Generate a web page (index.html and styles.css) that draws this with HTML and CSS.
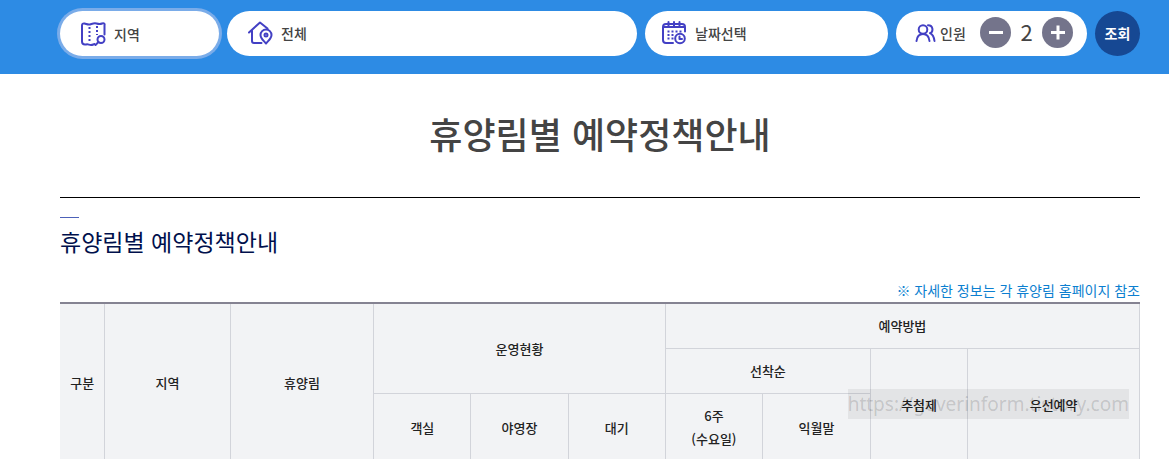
FILE: index.html
```html
<!DOCTYPE html>
<html lang="ko">
<head>
    <meta charset="UTF-8">
    <meta name="viewport" content="width=device-width, initial-scale=1.0">
    <title>휴양림별 예약정책안내</title>
    <link rel="stylesheet" href="styles.css">
</head>
<body>
    <header class="search-bar">
        <form class="search-form">
            <button type="button" class="field active">
                <svg class="icon" viewBox="0 0 25 24">
                    <path d="M5 22.500H4C2 22.500 1 21.500 1 19.500V3.500C1 2 2 1.200 3.500 1.500C6 2.200 7 3 9 2.500C12 1.500 13 .8 15.500 1.500C18 2.300 19 2.500 21 1.500C23 .8 24 1.500 23.500 3.500V12.500M5 22.500C7 21.800 8 23 10 23C11.500 23 12 22.500 13.500 22"/>
                    <path class="dots" d="M8.500 5V21M16 4V13"/>
                    <circle cx="20" cy="17.500" r="3.500"/>
                    <path d="M17.500 20L14.500 23"/>
                </svg>
                <span>지역</span>
            </button>
            <button type="button" class="field field-raised">
                <svg class="icon" viewBox="0 0 25 24">
                    <path d="M1 11.500L12 1.500L19.500 7.500M4 9.500V20C4 21.500 4.500 22 6 22H13.500"/>
                    <path d="M18 22.500C15.500 19.500 12.500 17.500 12.500 14A5.500 5.500 0 0 1 23.500 14C23.500 17.500 20.500 19.500 18 22.500Z"/>
                    <circle cx="18" cy="14" r="1.500"/>
                </svg>
                <span>전체</span>
            </button>
            <button type="button" class="field field-date">
                <svg class="icon" viewBox="0 0 25 24">
                    <path d="M11 22H4C2 22 1 21 1 19V6C1 4 2 3 4 3H20C22 3 23 4 23 6V10.500M1 6H23M6.500 1V5M12 1V5M17.500 1V5"/>
                    <path class="dots" d="M5.500 10.500H20M5.500 14H13M5.500 17.500H12"/>
                    <circle cx="18" cy="17.500" r="4.800"/>
                    <path d="M17.500 15.500V18H20"/>
                </svg>
                <span>날짜선택</span>
            </button>
            <div class="field field-raised field-people">
                <svg class="icon icon-people" viewBox="0 0 20 18">
                    <circle cx="7.500" cy="5.500" r="4.300"/>
                    <path d="M1 17C1.500 12.500 3.500 10 7.500 10S13.500 12.500 14 17M12.500 1.200C18 1.200 18 8 14.500 9.200C17.500 10.500 18.500 13 19 17"/>
                </svg>
                <label for="people">인원</label>
                <div class="stepper">
                    <button type="button" class="step" aria-label="인원 감소">
                        <svg viewBox="0 0 31 31"><path d="M9 15.500H23"/></svg>
                    </button>
                    <input type="text" id="people" value="2">
                    <button type="button" class="step" aria-label="인원 증가">
                        <svg viewBox="0 0 31 31"><path d="M9 15.500H23M16 8.500V22.500"/></svg>
                    </button>
                </div>
            </div>
            <button type="submit" class="submit">조회</button>
        </form>
    </header>

    <main class="container">
        <h1>휴양림별 예약정책안내</h1>
        <section class="policy">
            <h2>휴양림별 예약정책안내</h2>
            <p class="notice">※ 자세한 정보는 각 휴양림 홈페이지 참조</p>
            <div class="table-wrap">
                <table>
                    <colgroup>
                        <col class="col-type">
                        <col class="col-region">
                        <col class="col-forest">
                        <col class="col-item">
                        <col class="col-item">
                        <col class="col-item">
                        <col class="col-item">
                        <col class="col-month">
                        <col class="col-lottery">
                        <col class="col-priority">
                    </colgroup>
                    <thead>
                        <tr>
                            <th rowspan="3">구분</th>
                            <th rowspan="3">지역</th>
                            <th rowspan="3">휴양림</th>
                            <th colspan="3" rowspan="2">운영현황</th>
                            <th colspan="4">예약방법</th>
                        </tr>
                        <tr>
                            <th colspan="2">선착순</th>
                            <th rowspan="2">추첨제</th>
                            <th rowspan="2">우선예약</th>
                        </tr>
                        <tr>
                            <th>객실</th>
                            <th>야영장</th>
                            <th>대기</th>
                            <th>6주<br>(수요일)</th>
                            <th>익월말</th>
                        </tr>
                    </thead>
                </table>
                <span class="watermark">https://goverinform.tistory.com</span>
            </div>
        </section>
    </main>
</body>
</html>
```
FILE: styles.css
```css
* {
    box-sizing: border-box;
}
body {
    margin: 0;
    font-family: "Noto Sans CJK KR", sans-serif;
    color: #444;
    background: #fff;
}
button,
input {
    font-family: inherit;
    color: inherit;
    border: none;
    padding: 0;
}
button {
    cursor: pointer;
}
.search-bar {
    background: #2d8be4;
    padding: 11px 29px 18px 60px;
}
.search-form {
    display: grid;
    grid-template-columns: 159fr 410fr 243fr 191fr 45px;
    gap: 8px;
}
.field {
    display: flex;
    align-items: center;
    gap: 8px;
    height: 45px;
    padding: 0 21px;
    border-radius: 23px;
    background: #fff;
    font-size: 14px;
    font-weight: 500;
}
.field-raised {
    padding-bottom: 2px;
}
.field-date {
    padding: 0 17px 2px;
}
.field-people {
    gap: 4px;
    padding: 0 14px 2px 19px;
}
.active {
    box-shadow: 0 0 0 3px #7aace9;
}
.icon {
    width: 25px;
    height: 24px;
    flex: none;
    fill: none;
    stroke: #4340c4;
    stroke-width: 2;
    stroke-linecap: round;
    stroke-linejoin: round;
}
.icon .dots {
    stroke-linecap: butt;
    stroke-dasharray: 2 2;
}
.icon-people {
    width: 21px;
    height: 18px;
}
.stepper {
    display: flex;
    align-items: center;
    gap: 4px;
    margin-left: auto;
}
.step {
    width: 31px;
    height: 31px;
    border-radius: 50%;
    background: #74748b;
}
.step svg {
    display: block;
    fill: none;
    stroke: #fff;
    stroke-width: 3;
}
#people {
    width: 23px;
    height: 31px;
    padding-bottom: 4px;
    font-size: 22px;
    line-height: 27px;
    text-align: center;
    background: none;
}
.submit {
    height: 45px;
    padding-bottom: 2px;
    border-radius: 50%;
    background: #164893;
    color: #fff;
    font-size: 14px;
    font-weight: 700;
}
.container {
    padding: 0 29px 0 60px;
}
h1 {
    margin: 0;
    padding: 35px 0 40px;
    border-bottom: 1px solid #000;
    font-size: 36px;
    font-weight: 500;
    line-height: 48px;
    text-align: center;
}
.policy {
    padding-top: 19px;
}
.policy::before {
    content: "";
    display: block;
    width: 19px;
    height: 1px;
    background: #4d61b8;
}
h2 {
    margin: 0;
    padding-top: 6px;
    color: #00104c;
    font-size: 23px;
    font-weight: 400;
    line-height: 34px;
}
.notice {
    margin: 0;
    padding: 22px 0 2px;
    color: #0c7fd0;
    font-size: 14px;
    line-height: 20px;
    text-align: right;
}
.table-wrap {
    position: relative;
}
table {
    width: 100%;
    table-layout: fixed;
    border-collapse: separate;
    border-spacing: 0;
    border-top: 2px solid #858392;
}
th {
    height: 45px;
    padding: 10px 0 11px;
    border-right: 1px solid #d2d4da;
    border-bottom: 1px solid #d2d4da;
    background: #f2f3f5;
    color: #222;
    font-size: 13px;
    font-weight: 500;
    line-height: 23px;
}
.col-type {
    width: 4.200%;
}
.col-region {
    width: 11.600%;
}
.col-forest {
    width: 13.300%;
}
.col-item {
    width: 9%;
}
.col-month {
    width: 10%;
}
.col-lottery {
    width: 9%;
}
.watermark {
    position: absolute;
    right: 11px;
    top: 87px;
    background: rgba(0, 0, 0, 0.06);
    color: rgba(0, 0, 0, 0.15);
    font-family: "Noto Sans", sans-serif;
    font-size: 19px;
    line-height: 30px;
}
```
